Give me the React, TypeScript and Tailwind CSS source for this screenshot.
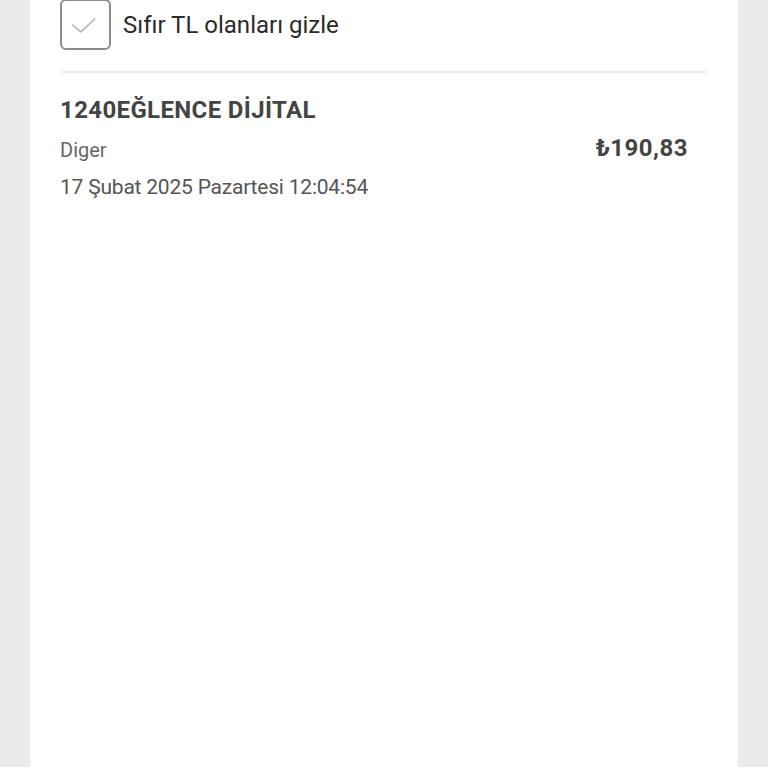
import React from "react";

interface Transaction {
  title: string;
  category: string;
  date: string;
  amount: string;
}

const transactions: Transaction[] = [
  {
    title: "1240EĞLENCE DİJİTAL",
    category: "Diger",
    date: "17 Şubat 2025 Pazartesi 12:04:54",
    amount: "₺190,83",
  },
];

const CheckBox: React.FC<{ checked?: boolean }> = ({ checked = true }) => (
  <div className="w-[51px] h-[51px] shrink-0 rounded-[6px] border-2 border-[#8c8c8c] bg-white flex items-center justify-center">
    {checked && (
      <svg width="51" height="51" viewBox="0 0 51 51" fill="none">
        <path
          d="M11.5 26L20.5 33.5L35.5 19.5"
          stroke="#b0b0b0"
          strokeWidth="1.6"
          strokeLinecap="round"
          strokeLinejoin="round"
        />
      </svg>
    )}
  </div>
);

export default function App() {
  return (
    <div
      className="min-h-screen bg-[#ebebeb] px-[30px]"
      style={{ fontFamily: "Roboto, 'Noto Sans', sans-serif" }}
    >
      <div className="bg-white min-h-[768px] px-[30px]">
        <div className="flex items-center h-[51px] -mt-[1px]">
          <CheckBox />
          <span className="ml-3 text-[24px] leading-none text-[#2b2b2b]">
            Sıfır TL olanları gizle
          </span>
        </div>

        <div className="mt-[21px] h-[2px] bg-[#efefef]" />

        {transactions.map((t, i) => (
          <div key={i} className="pt-[23px]">
            <div className="text-[24px] leading-[28px] font-bold tracking-[0.015em] text-[#444444]">
              {t.title}
            </div>
            <div className="flex items-center justify-between mt-[13px] pr-[20px]">
              <span className="text-[20px] leading-[26px] text-[#666666]">
                {t.category}
              </span>
              <span className="text-[24px] leading-[26px] font-bold tracking-[0.02em] text-[#444444] -mt-[5px]">
                {t.amount}
              </span>
            </div>
            <div className="mt-[11px] text-[21px] leading-[26px] text-[#555555] tracking-[-0.01em]">
              {t.date}
            </div>
          </div>
        ))}
      </div>
    </div>
  );
}
